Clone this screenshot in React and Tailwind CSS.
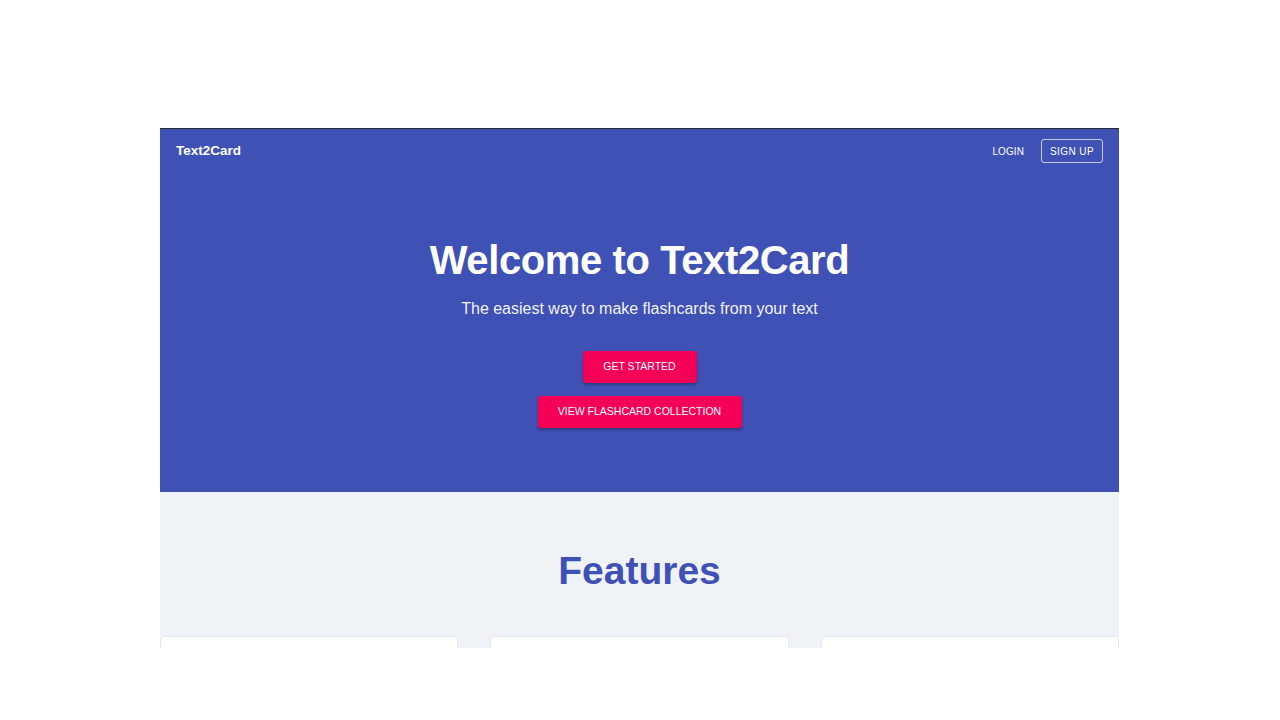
export default function App() {
  const font = { fontFamily: '"Liberation Sans", Arial, sans-serif' }

  return (
    <div className="min-h-screen bg-white pt-[128px]" style={font}>
      <div className="ml-[160px] w-[959px] h-[520px] overflow-hidden border-t border-[#2a2a2a] bg-[#eff2f7]">
        {/* Hero */}
        <section className="bg-[#3f51b5] h-[363px] flex flex-col">
          <nav className="flex items-center justify-between h-[44px] pl-4 pr-4">
            <span className="text-white font-bold text-[13.5px]">Text2Card</span>
            <div className="flex items-center gap-[17px]">
              <button className="text-white text-[10px] tracking-[0.01em]">LOGIN</button>
              <button className="text-white text-[10px] tracking-[0.04em] border border-white/70 rounded-[3px] w-[62px] h-[24px]">
                SIGN UP
              </button>
            </div>
          </nav>

          <div className="flex flex-col items-center pt-[67px]">
            <h1 className="text-white font-bold text-[40px] leading-none tracking-[-0.01em]">
              Welcome to Text2Card
            </h1>
            <p className="text-white/95 text-[16px] mt-[17px]">
              The easiest way to make flashcards from your text
            </p>
            <button className="mt-[30px] bg-[#f50057] text-white text-[10.5px] w-[114px] h-[32px] rounded-[3px] shadow-[0_2px_3px_rgba(0,0,0,0.3)]">
              GET STARTED
            </button>
            <button className="mt-[13px] bg-[#f50057] text-white text-[10.5px] w-[204px] h-[32px] rounded-[3px] shadow-[0_2px_3px_rgba(0,0,0,0.3)]">
              VIEW FLASHCARD COLLECTION
            </button>
          </div>
        </section>

        {/* Features */}
        <section className="flex flex-col items-center">
          <h2 className="text-[#3f51b5] font-bold text-[39px] leading-none mt-[59px]">Features</h2>
          <div className="grid grid-cols-3 gap-[32px] w-full mt-[46px]">
            <div className="h-[40px] bg-white rounded-[4px] border border-[#e6e9ee]" />
            <div className="h-[40px] bg-white rounded-[4px] border border-[#e6e9ee]" />
            <div className="h-[40px] bg-white rounded-[4px] border border-[#e6e9ee]" />
          </div>
        </section>
      </div>
    </div>
  )
}
